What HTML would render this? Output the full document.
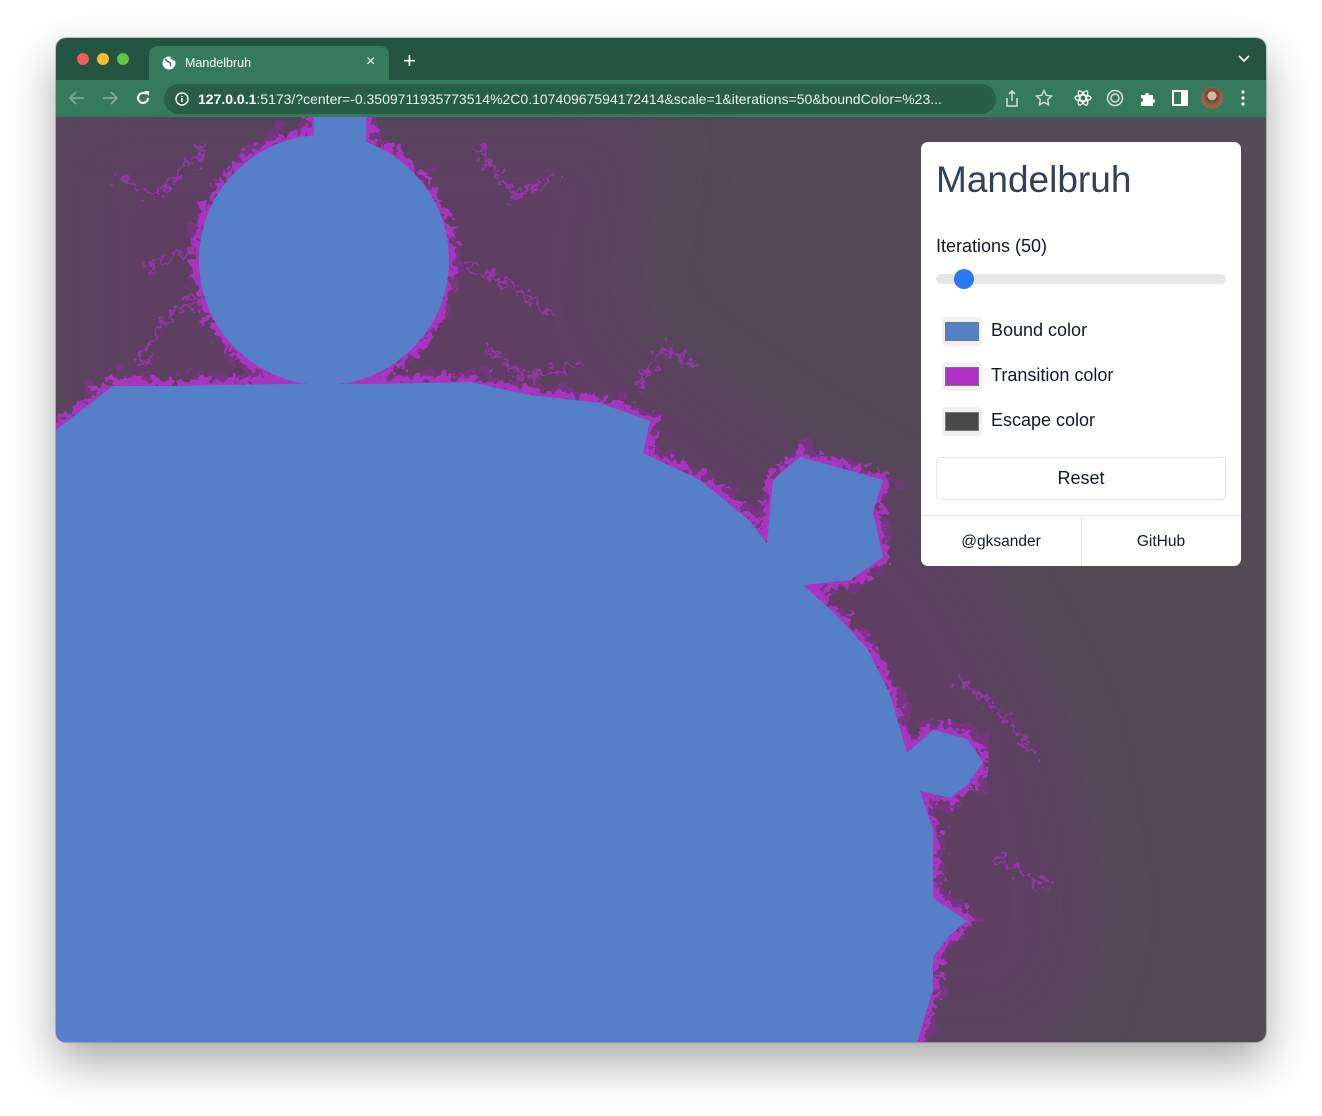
<!DOCTYPE html>
<html><head><meta charset="utf-8"><style>
*{box-sizing:border-box;margin:0;padding:0}
body{width:1322px;height:1116px;background:#fff;font-family:"Liberation Sans",Arial,sans-serif;position:relative;overflow:hidden}
.win{position:absolute;left:56px;top:38px;width:1210px;height:1004px;border-radius:10px;overflow:hidden;box-shadow:0 20px 45px rgba(0,0,0,.35),0 0 0 1px rgba(0,0,0,.2)}
.tabs{position:absolute;left:0;top:0;width:100%;height:42px;background:#245441}
.dot{position:absolute;top:15px;width:12px;height:12px;border-radius:50%}
.tab{position:absolute;left:93px;top:8px;width:240px;height:34px;background:#367a5e;border-radius:9px 9px 0 0;color:#fff;font-size:12.5px}
.bar{position:absolute;left:0;top:42px;width:100%;height:37px;background:#367a5e}
.url{position:absolute;left:108px;top:4px;width:832px;height:30px;border-radius:15px;background:#285e48;color:#e8f0ec;font-size:14px;line-height:30px;padding-left:34px;white-space:nowrap;overflow:hidden}
.content{position:absolute;left:0;top:79px;width:100%;height:925px;background:#524a55}
.panel{position:absolute;left:865px;top:25px;width:320px;height:424px;background:#fff;border-radius:7px;overflow:hidden;color:#111827}
.lab{position:absolute;left:70px;font-size:18px}
</style></head><body>
<div class="win">
<div class="tabs">
<div class="dot" style="left:21px;background:#ed5f57"></div>
<div class="dot" style="left:41px;background:#f5bd31"></div>
<div class="dot" style="left:61px;background:#5cc63f"></div>
<div class="tab"><svg style="position:absolute;left:13px;top:10px" width="14" height="14" viewBox="0 0 14 14"><circle cx="7" cy="7" r="6.5" fill="#fff"/><path d="M3 3c2 1 2 3 4 3s1 3 2 4M9 1c0 2 2 2 4 3" stroke="#367a5e" stroke-width="1.6" fill="none"/></svg><span style="position:absolute;left:36px;top:10px">Mandelbruh</span><span style="position:absolute;left:217px;top:7px;font-size:16px">×</span></div>
<span style="position:absolute;left:347px;top:12px;color:#fff;font-size:22px;line-height:22px">+</span>
<svg style="position:absolute;left:1182px;top:16px" width="12" height="10"><path d="M1 2l5 5 5-5" stroke="#fff" stroke-width="1.6" fill="none"/></svg>
</div>
<div class="bar">
<svg style="position:absolute;left:12px;top:10px" width="18" height="16"><path d="M16 8H3M8 2L2 8l6 6" stroke="#7fab97" stroke-width="1.8" fill="none"/></svg>
<svg style="position:absolute;left:45px;top:10px" width="18" height="16"><path d="M2 8h13M10 2l6 6-6 6" stroke="#7fab97" stroke-width="1.8" fill="none"/></svg>
<svg style="position:absolute;left:78px;top:9px" width="18" height="18"><path d="M14 9a5 5 0 1 1-2-4" stroke="#fff" stroke-width="2" fill="none"/><path d="M10 2h5v5z" fill="#fff"/></svg>
<div class="url"><svg style="position:absolute;left:11px;top:8px" width="14" height="14"><circle cx="7" cy="7" r="6" stroke="#fff" stroke-width="1.4" fill="none"/><path d="M7 6v4M7 4v1" stroke="#fff" stroke-width="1.5"/></svg><b style="color:#fff">127.0.0.1</b>:5173/?center=-0.3509711935773514%2C0.10740967594172414&amp;scale=1&amp;iterations=50&amp;boundColor=%23...</div>
<svg style="position:absolute;left:948px;top:10px" width="16" height="18"><path d="M8 1v10M5 4l3-3 3 3M3 8v8h10V8" stroke="#cfe0d8" stroke-width="1.5" fill="none"/></svg>
<svg style="position:absolute;left:979px;top:9px" width="18" height="18"><path d="M9 1.5l2.3 4.8 5.2.7-3.8 3.6.9 5.2L9 13.3 4.4 15.8l.9-5.2L1.5 7l5.2-.7z" stroke="#cfe0d8" stroke-width="1.4" fill="none"/></svg>
<svg style="position:absolute;left:1018px;top:9px" width="18" height="18"><ellipse cx="9" cy="9" rx="8" ry="3" stroke="#fff" stroke-width="1.3" fill="none"/><ellipse cx="9" cy="9" rx="8" ry="3" transform="rotate(60 9 9)" stroke="#fff" stroke-width="1.3" fill="none"/><ellipse cx="9" cy="9" rx="8" ry="3" transform="rotate(-60 9 9)" stroke="#fff" stroke-width="1.3" fill="none"/></svg>
<svg style="position:absolute;left:1050px;top:9px" width="18" height="18"><circle cx="9" cy="9" r="7.5" stroke="#ddd" stroke-width="1.5" fill="none"/><circle cx="9" cy="9" r="4" stroke="#ddd" stroke-width="1.5" fill="none"/></svg>
<svg style="position:absolute;left:1083px;top:9px" width="18" height="18"><path d="M2 6h4a2 2 0 1 1 4 0h4v4a2 2 0 1 1 0 4v3H2v-4a2 2 0 1 0 0-4z" fill="#fff"/></svg>
<svg style="position:absolute;left:1116px;top:10px" width="16" height="16"><rect x="1" y="1" width="14" height="14" fill="none" stroke="#fff" stroke-width="2"/><rect x="9" y="1" width="6" height="14" fill="#fff"/></svg>
<div style="position:absolute;left:1145px;top:7px;width:22px;height:22px;border-radius:50%;background:radial-gradient(circle at 50% 40%,#d9b8a0 0 25%,#6b4a3a 27%,#a0624a 60%)"></div>
<svg style="position:absolute;left:1184px;top:10px" width="6" height="16"><circle cx="3" cy="2" r="1.6" fill="#fff"/><circle cx="3" cy="8" r="1.6" fill="#fff"/><circle cx="3" cy="14" r="1.6" fill="#fff"/></svg>
</div>
<div class="content">
<svg width="1210" height="925" style="position:absolute;left:0;top:0">
<defs>
<filter id="wide" x="-20%" y="-20%" width="140%" height="140%"><feGaussianBlur stdDeviation="40"/></filter>
<filter id="spiky" x="-10%" y="-10%" width="120%" height="120%"><feTurbulence type="fractalNoise" baseFrequency="0.12" numOctaves="3" seed="7"/><feDisplacementMap in="SourceGraphic" scale="30" xChannelSelector="R" yChannelSelector="G"/></filter>
<filter id="spiky2" x="-10%" y="-10%" width="120%" height="120%"><feTurbulence type="fractalNoise" baseFrequency="0.05" numOctaves="2" seed="3"/><feDisplacementMap in="SourceGraphic" scale="40" xChannelSelector="R" yChannelSelector="G"/></filter>
<g id="bulb"><circle cx="268" cy="143" r="125"/><rect x="258" y="-5" width="52" height="60"/></g>
<path id="main" d="M0 313L57 269L115 269L230 267L316 267L414 265L474 278L544 286L594 304L587 336L644 363L694 404L711 427L717 363L744 340L777 349L827 363L817 395L827 440L794 463L747 468L777 495L811 531L834 577L851 636L877 613L911 622L927 645L911 668L894 681L864 674L877 713L877 781L911 804L894 818L877 840L877 872L861 926L0 926Z"/>
</defs>
<g filter="url(#wide)" opacity=".5">
<path d="M0 0L600 0L560 200L700 300L900 420L1000 600L1040 800L1000 925L0 925Z" fill="#6a3570"/>
</g>
<g filter="url(#spiky2)" fill="none" stroke="#7a3486" stroke-width="18" opacity=".8">
<use href="#bulb"/>
<use href="#main"/>
</g>
<g filter="url(#spiky)" fill="none" stroke="#a834c0" stroke-linejoin="round" stroke-width="12">
<use href="#bulb"/>
<use href="#main"/>
</g>
<g filter="url(#spiky)" fill="none" stroke="#9a34b0" stroke-width="4" opacity=".9">
<path d="M150 30L100 80L60 60M190 70L140 130L90 150M160 170L110 200L80 250M420 30L460 80L500 60M410 150L460 170L500 200M430 230L470 260L520 250M580 270L610 230L640 250M900 560L950 600L980 640M940 740L990 770"/>
</g>
<use href="#bulb" fill="#5580c8"/>
<use href="#main" fill="#5580c8"/>
</svg>
<div class="panel">
<div style="position:absolute;left:15px;top:17px;font-size:37px;color:#334155">Mandelbruh</div>
<div style="position:absolute;left:15px;top:94px;font-size:18px">Iterations (50)</div>
<div style="position:absolute;left:15px;top:132px;width:290px;height:10px;border-radius:5px;background:#e5e7eb"></div>
<div style="position:absolute;left:33px;top:127px;width:20px;height:20px;border-radius:50%;background:#2a7af3"></div>
<div style="position:absolute;left:21px;top:175px;width:40px;height:29px;border-radius:4px;background:#f0f0f0"><div style="margin:5px 3px;width:34px;height:19px;background:#5580c8;border:1px solid #777"></div></div>
<div class="lab" style="top:178px">Bound color</div>
<div style="position:absolute;left:21px;top:220px;width:40px;height:29px;border-radius:4px;background:#f0f0f0"><div style="margin:5px 3px;width:34px;height:19px;background:#b030c8;border:1px solid #777"></div></div>
<div class="lab" style="top:223px">Transition color</div>
<div style="position:absolute;left:21px;top:265px;width:40px;height:29px;border-radius:4px;background:#f0f0f0"><div style="margin:5px 3px;width:34px;height:19px;background:#4a4a4a;border:1px solid #777"></div></div>
<div class="lab" style="top:268px">Escape color</div>
<div style="position:absolute;left:15px;top:315px;width:290px;height:43px;border:1px solid #e2e4e8;border-radius:4px;text-align:center;line-height:41px;font-size:18px">Reset</div>
<div style="position:absolute;left:0;top:373px;width:320px;border-top:1px solid #e5e7eb"></div>
<div style="position:absolute;left:160px;top:374px;height:50px;border-left:1px solid #e5e7eb"></div>
<div style="position:absolute;left:0;top:391px;width:160px;text-align:center;font-size:15.5px">@gksander</div>
<div style="position:absolute;left:160px;top:391px;width:160px;text-align:center;font-size:15.5px">GitHub</div>
</div>
</div>
</div>
</body></html>
